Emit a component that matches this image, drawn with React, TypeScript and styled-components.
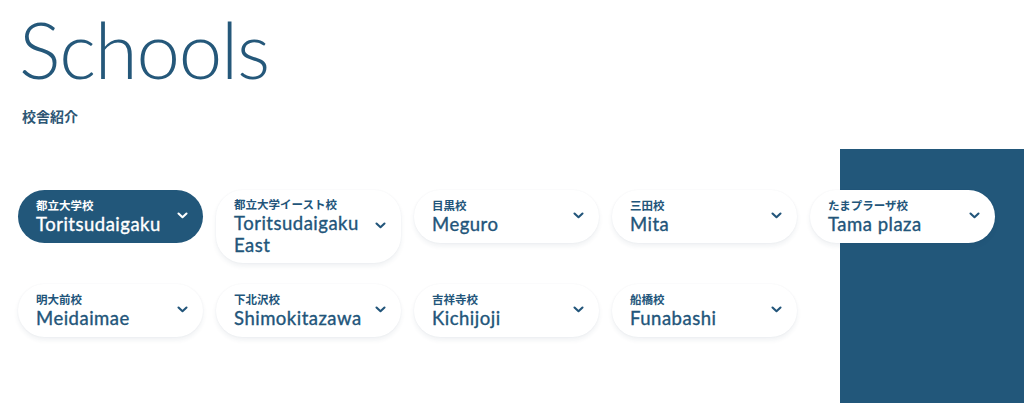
import React from 'react';
import styled, { createGlobalStyle } from 'styled-components';

const GlobalStyle = createGlobalStyle`
  html, body {
    margin: 0;
    padding: 0;
    background: #ffffff;
  }
  body {
    font-family: Lato, "Noto Sans", "Noto Sans CJK JP", sans-serif;
    color: #22557a;
  }
`;

const Page = styled.section`
  position: relative;
  width: 1024px;
  height: 403px;
  overflow: hidden;
  background: #ffffff;
`;

// the dark block on the right that sits behind the cards
const Backdrop = styled.div`
  position: absolute;
  left: 840px;
  top: 149px;
  right: 0;
  bottom: 0;
  background: #22577a;
  z-index: 0;
`;

const Content = styled.div`
  position: relative;
  z-index: 1;
  padding: 4px 0 0 18px;
`;

const Title = styled.h1`
  margin: 0 0 0 1px;
  font-family: Lato, "Noto Sans", sans-serif;
  font-weight: 300;
  font-size: 78px;
  line-height: 90px;
  letter-spacing: -1.2px;
  color: #25587a;
`;

const Subtitle = styled.p`
  margin: 12px 0 0 4px;
  font-family: "Noto Sans CJK JP", sans-serif;
  font-weight: 700;
  font-size: 14px;
  line-height: 20px;
  color: #2d5674;
`;

const Grid = styled.div`
  display: grid;
  grid-template-columns: repeat(5, 185px);
  column-gap: 13px;
  row-gap: 21px;
  align-items: start;
  margin-top: 64px;
`;

const Card = styled.button<{ $active?: boolean }>`
  display: flex;
  align-items: center;
  gap: 8px;
  width: 100%;
  min-height: 53px;
  padding: 7px 15px 7px 18px;
  border: none;
  border-radius: 27px;
  text-align: left;
  cursor: pointer;
  background: ${({ $active }) => ($active ? '#22577a' : '#ffffff')};
  color: ${({ $active }) => ($active ? '#ffffff' : '#22557a')};
  box-shadow: ${({ $active }) =>
    $active ? 'none' : '0 3px 5px rgba(30, 60, 90, 0.07), 0 0 2px rgba(30, 60, 90, 0.05)'};
`;

const Labels = styled.span`
  display: flex;
  flex-direction: column;
  flex: 1;
  min-width: 0;
`;

const Kanji = styled.span`
  font-family: "Noto Sans CJK JP", sans-serif;
  font-weight: 700;
  font-size: 11.5px;
  line-height: 15px;
`;

const Name = styled.span`
  font-family: Lato, "Noto Sans", sans-serif;
  font-weight: 400;
  font-size: 18.5px;
  line-height: 22px;
  letter-spacing: 0.5px;
  -webkit-text-stroke: 0.35px currentColor;
`;

const Chevron = styled.svg`
  flex: none;
  width: 11px;
  height: 7px;
  margin-top: -2px;
`;

const Arrow = () => (
  <Chevron viewBox="0 0 11 7" fill="none">
    <polyline points="1.5,1.5 5.5,5.2 9.5,1.5" stroke="currentColor" strokeWidth="2.1" strokeLinecap="round" strokeLinejoin="round" />
  </Chevron>
);

const schools = [
  { jp: '都立大学校', en: 'Toritsudaigaku', active: true },
  { jp: '都立大学イースト校', en: 'Toritsudaigaku East' },
  { jp: '目黒校', en: 'Meguro' },
  { jp: '三田校', en: 'Mita' },
  { jp: 'たまプラーザ校', en: 'Tama plaza' },
  { jp: '明大前校', en: 'Meidaimae' },
  { jp: '下北沢校', en: 'Shimokitazawa' },
  { jp: '吉祥寺校', en: 'Kichijoji' },
  { jp: '船橋校', en: 'Funabashi' },
];

const App: React.FC = () => (
  <Page>
    <GlobalStyle />
    <Backdrop />
    <Content>
      <Title>Schools</Title>
      <Subtitle>校舎紹介</Subtitle>
      <Grid>
        {schools.map((s) => (
          <Card key={s.en} $active={s.active}>
            <Labels>
              <Kanji>{s.jp}</Kanji>
              <Name>{s.en}</Name>
            </Labels>
            <Arrow />
          </Card>
        ))}
      </Grid>
    </Content>
  </Page>
);

export default App;
